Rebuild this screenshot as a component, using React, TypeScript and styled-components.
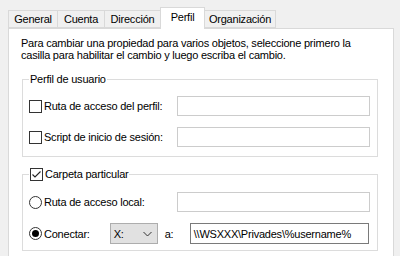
import styled, { createGlobalStyle } from 'styled-components';

const GlobalStyle = createGlobalStyle`
  html, body {
    margin: 0;
    padding: 0;
    background: #f0f0f0;
  }
  body {
    font-family: "Liberation Sans", Arial, sans-serif;
    font-size: 11px;
    letter-spacing: -0.22px;
    color: #000;
  }
`;

const Dialog = styled.div`
  width: 400px;
  height: 256px;
  overflow: hidden;
  padding: 7px 7px 0 8px;
  box-sizing: border-box;
`;

const TabBar = styled.div`
  display: flex;
  align-items: flex-end;
  height: 21px;
  position: relative;
  z-index: 1;
`;

const Tab = styled.div<{ $w: number; $active?: boolean }>`
  width: ${(p) => p.$w}px;
  height: ${(p) => (p.$active ? 22 : 18)}px;
  margin-left: -1px;
  margin-bottom: ${(p) => (p.$active ? -1 : 0)}px;
  box-sizing: border-box;
  border: 1px solid #d9d9d9;
  border-bottom: ${(p) => (p.$active ? 'none' : '1px solid #d9d9d9')};
  background: ${(p) => (p.$active ? '#fff' : '#f0f0f0')};
  display: flex;
  align-items: center;
  justify-content: center;
  padding-bottom: ${(p) => (p.$active ? 3 : 0)}px;
  &:first-child {
    margin-left: 0;
  }
`;

const Panel = styled.div`
  width: 386px;
  height: 240px;
  box-sizing: border-box;
  background: #fff;
  border: 1px solid #d9d9d9;
  padding: 8px 15px 0 12px;
`;

const Intro = styled.p`
  margin: 0;
  line-height: 12px;
`;

const Group = styled.fieldset<{ $top: number; $h: number }>`
  margin: ${(p) => p.$top}px 0 0 1px;
  padding: 0 7px 0 6px;
  border: 1px solid #dcdcdc;
  height: ${(p) => p.$h}px;
  box-sizing: border-box;
  min-width: 0;
`;

const Legend = styled.legend`
  padding: 0 1px;
  display: flex;
  align-items: center;
  gap: 2px;
  line-height: 14px;
`;

const Rows = styled.div<{ $top: number }>`
  display: flex;
  flex-direction: column;
  gap: 11px;
  margin-top: ${(p) => p.$top}px;
`;

const Row = styled.div`
  display: grid;
  grid-template-columns: 148px 1fr;
  align-items: center;
  height: 20px;
`;

const ConnectRow = styled.div`
  display: flex;
  align-items: center;
  height: 21px;
`;

const Choice = styled.label`
  display: flex;
  align-items: center;
  gap: 2px;
  white-space: nowrap;
`;

const Box = styled.span`
  width: 13px;
  height: 13px;
  box-sizing: border-box;
  border: 1px solid #333;
  background: #fff;
  display: inline-flex;
  align-items: center;
  justify-content: center;
  flex: none;
`;

const Radio = styled.span<{ $on?: boolean }>`
  width: 13px;
  height: 13px;
  box-sizing: border-box;
  border: 1px solid #333;
  border-radius: 50%;
  background: #fff;
  display: inline-flex;
  align-items: center;
  justify-content: center;
  flex: none;
  &::after {
    content: '';
    width: 7px;
    height: 7px;
    border-radius: 50%;
    background: ${(p) => (p.$on ? '#000' : 'transparent')};
  }
`;

const Field = styled.div<{ $dark?: boolean; $w?: number }>`
  height: ${(p) => (p.$dark ? 21 : 20)}px;
  width: ${(p) => (p.$w ? `${p.$w}px` : 'auto')};
  box-sizing: border-box;
  border: 1px solid ${(p) => (p.$dark ? '#7a7a7a' : '#cccccc')};
  background: #fff;
  display: flex;
  align-items: center;
  padding-left: 3px;
  white-space: nowrap;
  overflow: hidden;
`;

const Select = styled.div`
  width: 48px;
  height: 21px;
  box-sizing: border-box;
  margin-left: 20px;
  border: 1px solid #adadad;
  background: #e1e1e1;
  display: flex;
  align-items: center;
  justify-content: space-between;
  padding: 0 5px 0 3px;
`;

const ALabel = styled.span`
  margin: 0 0 0 7px;
  width: 25px;
`;

const Check = () => (
  <Box>
    <svg width="11" height="11" viewBox="0 0 11 11">
      <path d="M1.5 5.5 L4 8 L9.5 2.5" fill="none" stroke="#222" strokeWidth="1.1" />
    </svg>
  </Box>
);

export default function App() {
  return (
    <Dialog>
      <GlobalStyle />
      <TabBar>
        <Tab $w={50}>General</Tab>
        <Tab $w={48}>Cuenta</Tab>
        <Tab $w={57}>Dirección</Tab>
        <Tab $w={45} $active>
          Perfil
        </Tab>
        <Tab $w={72}>Organización</Tab>
      </TabBar>
      <Panel>
        <Intro>
          Para cambiar una propiedad para varios objetos, seleccione primero la
          <br />
          casilla para habilitar el cambio y luego escriba el cambio.
        </Intro>
        <Group $top={11} $h={85}>
          <Legend>Perfil de usuario</Legend>
          <Rows $top={10}>
            <Row>
              <Choice>
                <Box />
                Ruta de acceso del perfil:
              </Choice>
              <Field />
            </Row>
            <Row>
              <Choice>
                <Box />
                Script de inicio de sesión:
              </Choice>
              <Field />
            </Row>
          </Rows>
        </Group>
        <Group $top={10} $h={84}>
          <Legend>
            <Check />
            Carpeta particular
          </Legend>
          <Rows $top={11}>
            <Row>
              <Choice>
                <Radio />
                Ruta de acceso local:
              </Choice>
              <Field />
            </Row>
            <ConnectRow>
              <Choice>
                <Radio $on />
                Conectar:
              </Choice>
              <Select>
                <span>X:</span>
                <svg width="9" height="6" viewBox="0 0 9 6">
                  <path d="M0.5 1 L4.5 5 L8.5 1" fill="none" stroke="#333" strokeWidth="1" />
                </svg>
              </Select>
              <ALabel>a:</ALabel>
              <Field $dark $w={179}>
                \\WSXXX\Privades\%username%
              </Field>
            </ConnectRow>
          </Rows>
        </Group>
      </Panel>
    </Dialog>
  );
}
